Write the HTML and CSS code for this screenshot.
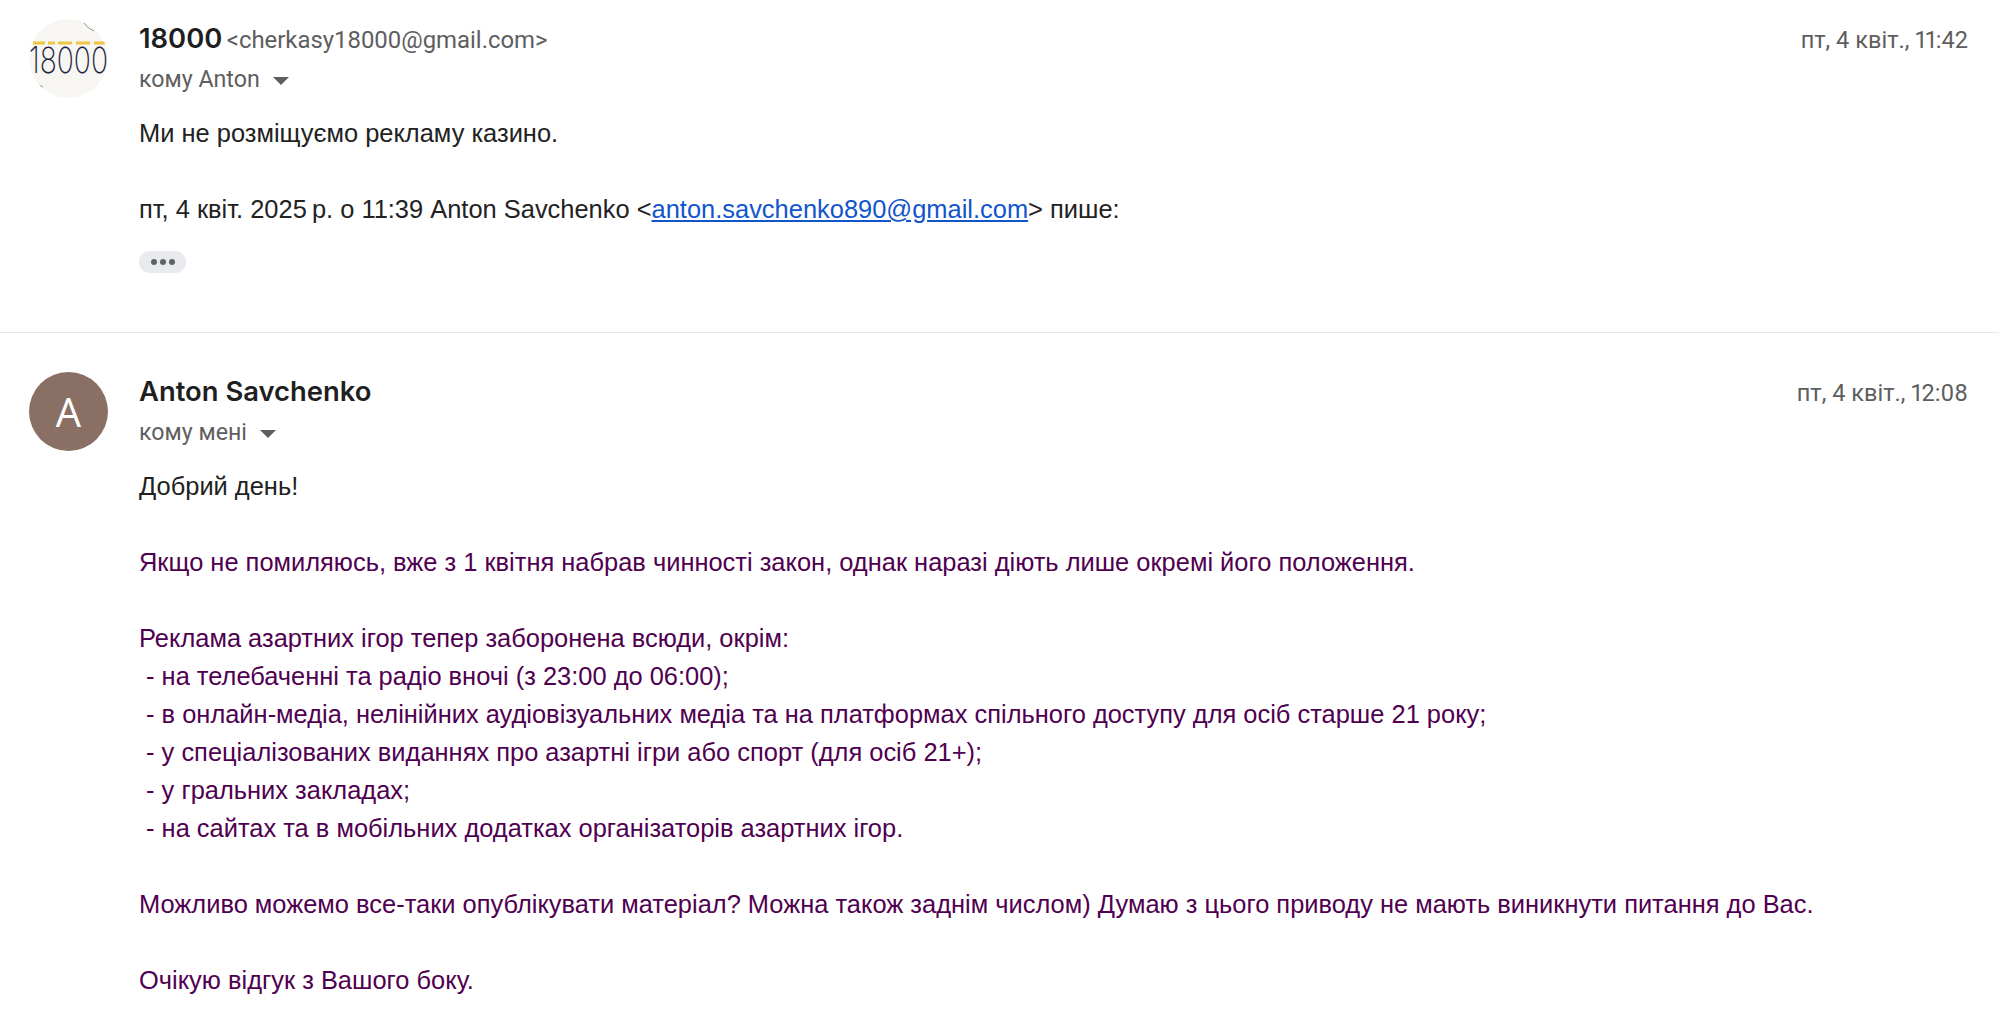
FILE: index.html
```html
<!DOCTYPE html>
<html lang="uk">
<head>
  <meta charset="UTF-8" />
  <meta name="viewport" content="width=device-width, initial-scale=1.0" />
  <title>Лист</title>
  <link rel="stylesheet" href="styles.css">
</head>
<body>
  <article class="message message-first">
    <svg class="avatar" viewBox="0 0 79 79" aria-label="18000">
      <circle cx="39.5" cy="39.5" r="39.5" fill="#f7f6f2" />
      <path d="M55 4q4 6 10 8M10 66l4 2" fill="none" stroke="#9a9a9a" stroke-width="1" />
      <path d="M4 24h12M19 24h7M29 24h14M47 24h14M65 24h11" stroke="#f0c53f" stroke-width="3" />
      <text class="avatar-logo" x="0" y="54" textLength="79" lengthAdjust="spacingAndGlyphs">18000</text>
    </svg>
    <div class="content">
      <div class="head">
        <div class="sender">
          <span class="name">18000</span>
          <span class="email">&lt;cherkasy18000@gmail.com&gt;</span>
        </div>
        <div class="date">пт, 4 квіт., 11:42</div>
      </div>
      <div class="recipient">кому Anton <span class="caret"></span></div>
      <div class="body">
        <p>Ми не розміщуємо рекламу казино.</p>
        <p>пт, 4 квіт. 2025&#8201;р. о 11:39 Anton Savchenko &lt;<a href="#">anton.savchenko890@gmail.com</a>&gt; пише:</p>
      </div>
      <div class="more"><span></span><span></span><span></span></div>
    </div>
  </article>

  <article class="message">
    <div class="avatar avatar-letter">A</div>
    <div class="content">
      <div class="head">
        <div class="sender">
          <span class="name">Anton Savchenko</span>
        </div>
        <div class="date">пт, 4 квіт., 12:08</div>
      </div>
      <div class="recipient">кому мені <span class="caret"></span></div>
      <div class="body">
        <p>Добрий день!</p>
        <div class="quoted">
          <p>Якщо не помиляюсь, вже з 1 квітня набрав чинності закон, однак наразі діють лише окремі його положення.</p>
          <p>Реклама азартних ігор тепер заборонена всюди, окрім:<br>
          &nbsp;- на телебаченні та радіо вночі (з 23:00 до 06:00);<br>
          &nbsp;- в онлайн-медіа, нелінійних аудіовізуальних медіа та на платформах спільного доступу для осіб старше 21 року;<br>
          &nbsp;- у спеціалізованих виданнях про азартні ігри або спорт (для осіб 21+);<br>
          &nbsp;- у гральних закладах;<br>
          &nbsp;- на сайтах та в мобільних додатках організаторів азартних ігор.</p>
          <p>Можливо можемо все-таки опублікувати матеріал? Можна також заднім числом) Думаю з цього приводу не мають виникнути питання до Вас.</p>
          <p>Очікую відгук з Вашого боку.</p>
        </div>
      </div>
    </div>
  </article>
</body>
</html>
```

FILE: styles.css
```css
body {
  margin: 0;
  height: 1028px;
  overflow: hidden;
  background: #fff;
  font-family: "Liberation Sans", Arial, sans-serif;
  color: #222;
}
.message {
  display: flex;
  gap: 31px;
  padding: 19px 31px 0 29px;
}
.message-first {
  height: 313px;
  border-bottom: 1px solid #e6e6e6;
}
.message + .message {
  padding-top: 39px;
}
.avatar {
  flex: none;
  width: 79px;
  height: 79px;
  border-radius: 50%;
}
.avatar-logo {
  font-family: Inter, sans-serif;
  font-weight: 200;
  font-size: 36px;
  fill: #23233f;
}
.avatar-letter {
  display: flex;
  align-items: center;
  justify-content: center;
  background: #8a7064;
  color: #fff;
  font-family: "Open Sans", sans-serif;
  font-size: 40px;
}
.content {
  flex: 1;
  min-width: 0;
}
.head {
  display: flex;
  justify-content: space-between;
  align-items: baseline;
  line-height: 38px;
}
.name {
  font-family: Inter, sans-serif;
  font-weight: 600;
  font-size: 27.4px;
  color: #1f1f1f;
}
.email {
  font-family: Roboto, sans-serif;
  font-size: 23.9px;
  color: #5e5e5e;
}
.date {
  font-family: Roboto, sans-serif;
  font-size: 23.6px;
  font-variant-numeric: proportional-nums;
  color: #5e5e5e;
}
.recipient {
  font-family: Roboto, sans-serif;
  font-size: 23.2px;
  line-height: 38px;
  margin-top: -2px;
  color: #5e5e5e;
}
.caret {
  display: inline-block;
  margin-left: 7px;
  vertical-align: middle;
  border-left: 8px solid transparent;
  border-right: 8px solid transparent;
  border-top: 8px solid #5e5e5e;
}
.body {
  margin-top: 16px;
  font-size: 25.45px;
  line-height: 38px;
}
.body p {
  margin: 0 0 38px;
}
.quoted {
  color: #500050;
}
.body a {
  color: #1155cc;
}
.more {
  display: flex;
  align-items: center;
  justify-content: center;
  gap: 3px;
  width: 47px;
  height: 22px;
  margin-top: -15px;
  border-radius: 11px;
  background: #e8eaed;
}
.more span {
  width: 6px;
  height: 6px;
  border-radius: 50%;
  background: #5f6368;
}
```
